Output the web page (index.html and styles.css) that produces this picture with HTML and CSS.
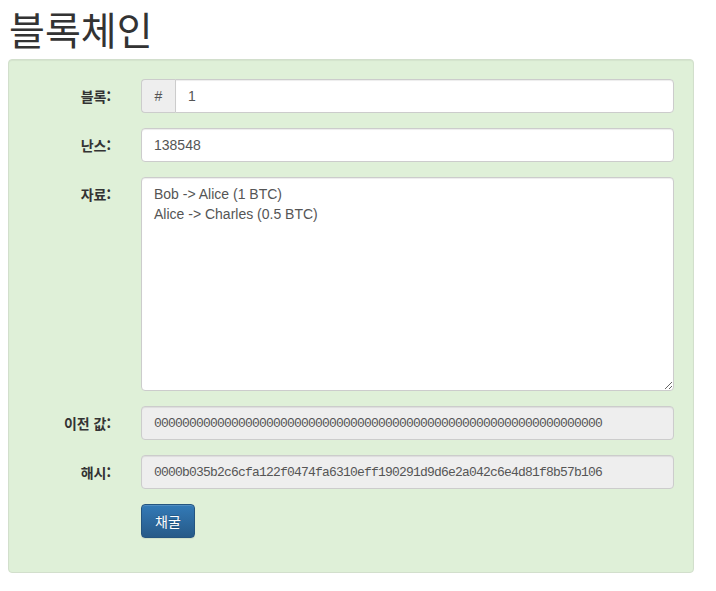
FILE: index.html
```
<!DOCTYPE html>
<html lang="ko">
<head>
<meta charset="utf-8">
<title>블록체인</title>
<link rel="stylesheet" href="styles.css">
</head>
<body>
<div class="page">
  <h1 class="title">블록체인</h1>
  <div class="well">
    <form class="form">
      <div class="row">
        <label class="label">블록:</label>
        <div class="group">
          <span class="addon">#</span>
          <input class="control control-joined" type="text" value="1">
        </div>
      </div>
      <div class="row">
        <label class="label">난스:</label>
        <input class="control" type="text" value="138548">
      </div>
      <div class="row">
        <label class="label">자료:</label>
        <textarea class="control area" rows="10">Bob -&gt; Alice (1 BTC)
Alice -&gt; Charles (0.5 BTC)</textarea>
      </div>
      <div class="row">
        <label class="label">이전 값:</label>
        <input class="control mono" type="text" readonly value="0000000000000000000000000000000000000000000000000000000000000000">
      </div>
      <div class="row">
        <label class="label">해시:</label>
        <input class="control mono" type="text" readonly value="0000b035b2c6cfa122f0474fa6310eff190291d9d6e2a042c6e4d81f8b57b106">
      </div>
      <div class="row">
        <span class="label"></span>
        <div><button class="btn" type="button">채굴</button></div>
      </div>
    </form>
  </div>
</div>
</body>
</html>
```

FILE: styles.css
```
* { box-sizing: border-box; }
html, body { margin: 0; padding: 0; background: #fff; }
body {
  font-family: "Liberation Sans", "Noto Sans CJK KR", Arial, sans-serif;
  font-size: 14px;
  line-height: 1.42857;
  color: #333;
}
.page { padding: 0 22px 0 8px; }
.title {
  margin: 7px 0 10px 1px;
  font-family: "Noto Sans CJK KR", sans-serif;
  font-weight: 400;
  font-size: 39px;
  line-height: 42px;
  color: #333;
}
.well {
  background: #dff0d8;
  border: 1px solid #d2dfcc;
  border-radius: 4px;
  padding: 19px;
  box-shadow: inset 0 1px 1px rgba(0,0,0,.05);
}
.row {
  display: grid;
  grid-template-columns: 83px 1fr;
  column-gap: 30px;
  margin-bottom: 15px;
}
.label {
  text-align: right;
  font-family: "Noto Sans CJK KR", sans-serif;
  font-weight: 700;
  padding-top: 7px;
  line-height: 20px;
  color: #333;
}
.group { display: flex; }
.addon {
  flex: none;
  width: 34px;
  height: 34px;
  padding: 6px 12px;
  line-height: 20px;
  text-align: center;
  color: #555;
  background: #eee;
  border: 1px solid #ccc;
  border-right: 0;
  border-radius: 4px 0 0 4px;
}
.control {
  display: block;
  width: 100%;
  height: 34px;
  padding: 6px 12px;
  font-family: "Liberation Sans", "Noto Sans CJK KR", Arial, sans-serif;
  font-size: 14px;
  line-height: 20px;
  color: #555;
  background: #fff;
  border: 1px solid #ccc;
  border-radius: 4px;
  box-shadow: inset 0 1px 1px rgba(0,0,0,.075);
  outline: none;
  margin: 0;
}
.control-joined { border-radius: 0 4px 4px 0; }
.area { height: 214px; resize: vertical; }
.mono {
  background: #eee;
  font-family: "Liberation Mono", monospace;
  font-size: 13px;
  letter-spacing: -0.8px;
}
.btn {
  display: inline-block;
  height: 34px;
  padding: 6px 13px;
  font-family: "Noto Sans CJK KR", sans-serif;
  font-size: 14px;
  line-height: 20px;
  color: #fff;
  background-image: linear-gradient(to bottom, #337ab7 0, #265a88 100%);
  border: 1px solid #245580;
  border-radius: 4px;
  text-shadow: 0 -1px 0 rgba(0,0,0,.2);
  box-shadow: inset 0 1px 0 rgba(255,255,255,.15), 0 1px 1px rgba(0,0,0,.075);
  cursor: pointer;
}
```
